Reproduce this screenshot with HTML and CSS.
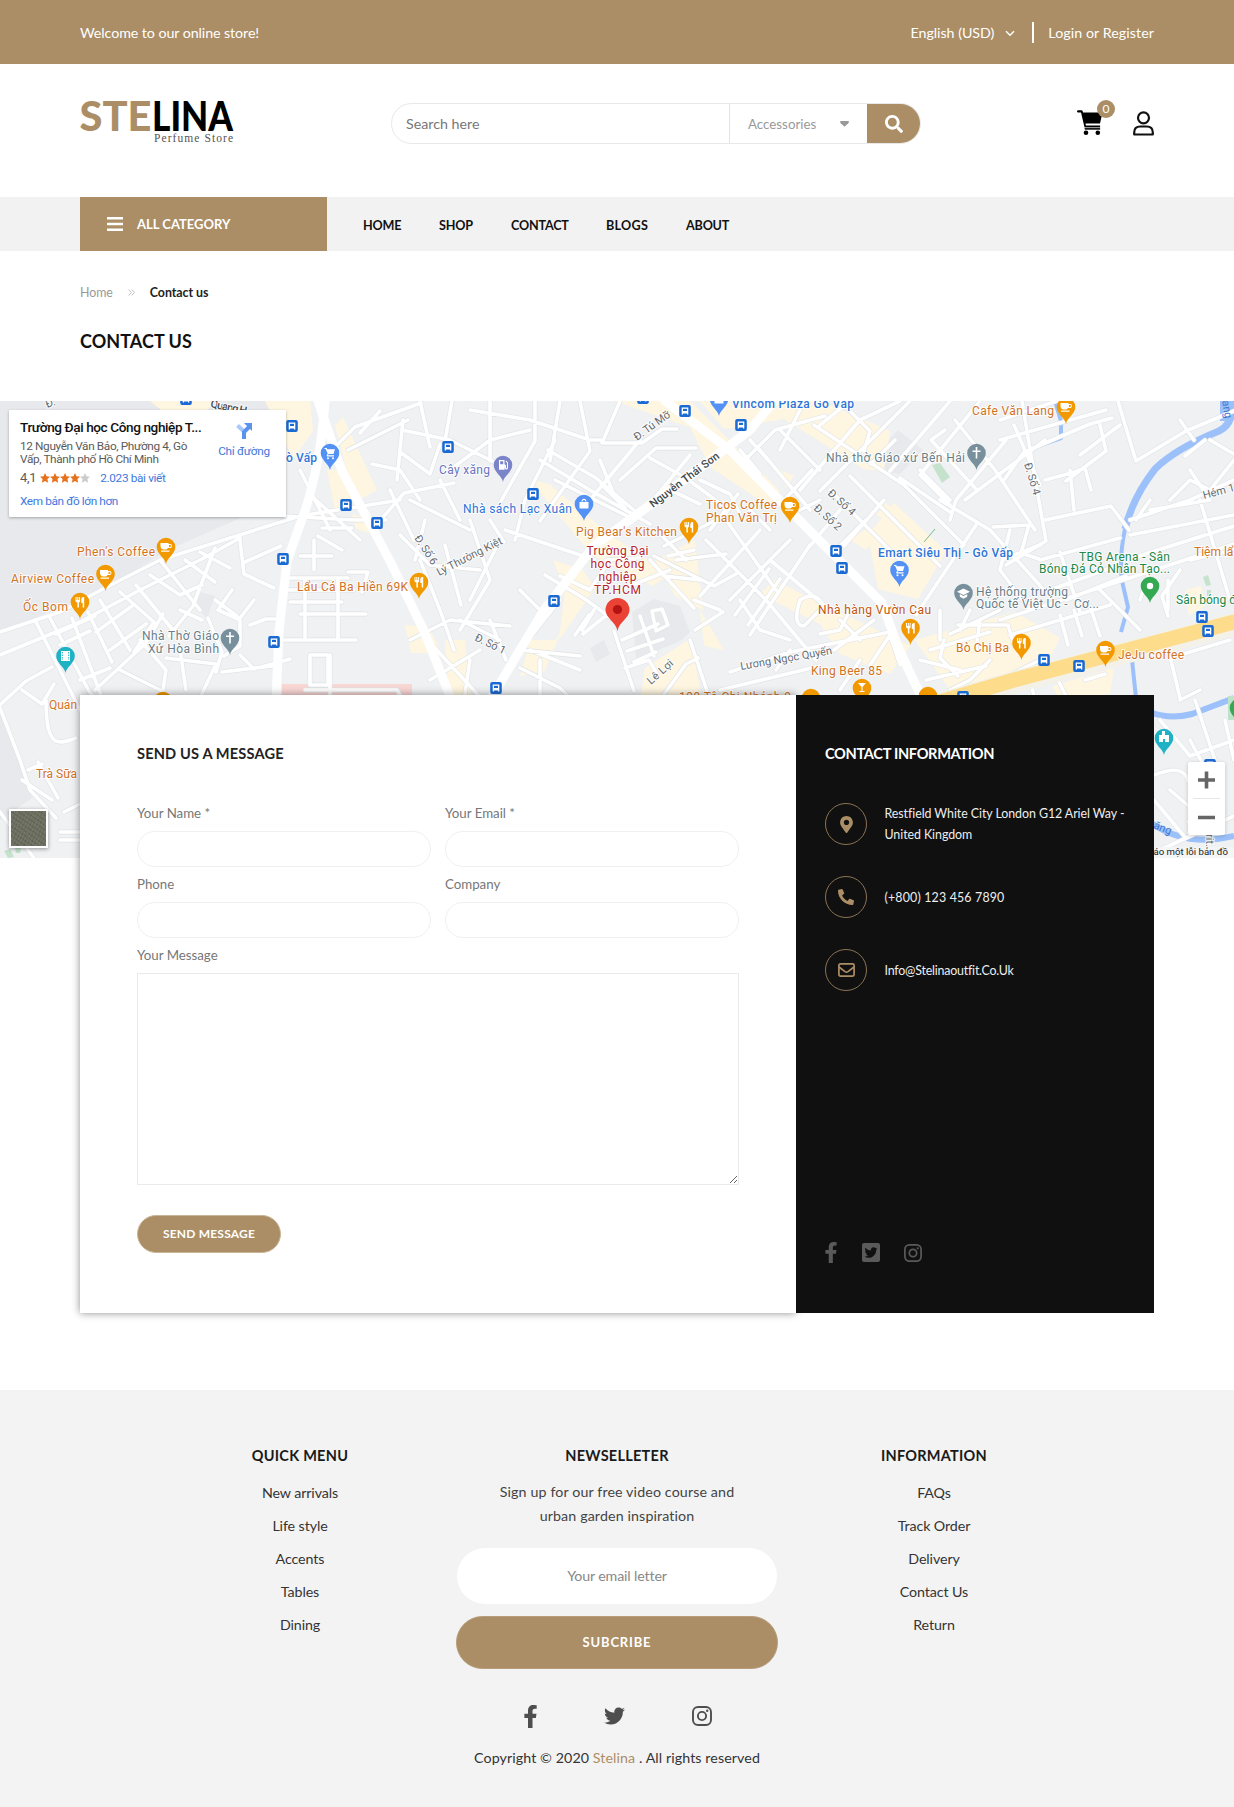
FILE: index.html
```html
<!DOCTYPE html>
<html lang="en">
<head>
<meta charset="utf-8">
<title>Contact us - Stelina</title>
<link rel="stylesheet" href="styles.css">
</head>
<body>
<svg class="defs" aria-hidden="true">
  <defs>
    <symbol id="facebook" viewBox="0 0 320 512"><path d="M279.14 288l14.22-92.66h-88.91v-60.13c0-25.35 12.42-50.06 52.24-50.06h40.42V6.26S260.43 0 225.36 0c-73.22 0-121.08 44.38-121.08 124.72v70.62H22.89V288h81.39v224h100.17V288z"/></symbol>
    <symbol id="twitter" viewBox="0 0 512 512"><path d="M459.37 151.716c.325 4.548.325 9.097.325 13.645 0 138.72-105.583 298.558-298.558 298.558-59.452 0-114.68-17.219-161.137-47.106 8.447.974 16.568 1.299 25.34 1.299 49.055 0 94.213-16.568 130.274-44.832-46.132-.975-84.792-31.188-98.112-72.772 6.498.974 12.995 1.624 19.818 1.624 9.421 0 18.843-1.3 27.614-3.573-48.081-9.747-84.143-51.98-84.143-102.985v-1.299c13.969 7.797 30.214 12.67 47.431 13.319-28.264-18.843-46.781-51.005-46.781-87.391 0-19.492 5.197-37.36 14.294-52.954 51.655 63.675 129.3 105.258 216.365 109.807-1.624-7.797-2.599-15.918-2.599-24.04 0-57.828 46.782-104.934 104.934-104.934 30.213 0 57.502 12.67 76.67 33.137 23.715-4.548 46.456-13.32 66.599-25.34-7.798 24.366-24.366 44.833-46.132 57.827 21.117-2.273 41.584-8.122 60.426-16.243-14.292 20.791-32.161 39.308-52.628 54.253z"/></symbol>
    <symbol id="instagram" viewBox="0 0 20 20"><rect x="1" y="1" width="18" height="18" rx="5" fill="none" stroke="currentColor" stroke-width="1.9"/><circle cx="10" cy="10" r="4.1" fill="none" stroke="currentColor" stroke-width="1.9"/><circle cx="15.2" cy="4.8" r="1.2"/></symbol>

    <path id="pin" d="M0 0C-1-6-9.300-10-9.300-17A9.300 9.300 0 0 1 9.300-17C9.300-10 1-6 0 0z"/>
    <g id="g-cup"><path d="M-5.500-21h8v1h1.500a1.800 1.800 0 0 1 0 4H2q-1 1.500-2.500 1.500h-1.500q-3.500 0-3.500-4zM3-19v2h1a1 1 0 0 0 0-2zM-5-13.500H3.500v1.200H-5z"/></g>
    <g id="g-fork"><path d="M-4.500-22h1v3h.8v-3h1v3h.8v-3h1v4q0 1.300-1.200 1.600v5h-1.500v-5Q-4.500-17-4.500-18zM3-22h1.200v10.600H2.700V-16H1.300v-3.500Q1.300-21.700 3-22z"/></g>
    <g id="g-cross"><path d="M-.8-23h1.600v3.500H4v1.600H.8v6.400H-.8v-6.400H-4v-1.600h3.200z"/></g>
    <g id="g-cart"><path d="M-5.500-22h2.200l.5 1.300H5L3.500-16h-5l-.5 1.200h6v1.200h-7l-.3-.8 1-1.800-2-4.700h-1.200zM-2-12.800a1 1 0 1 1 0 2 1 1 0 0 1 0-2zm5 0a1 1 0 1 1 0 2 1 1 0 0 1 0-2z"/></g>
    <g id="g-bag"><path d="M-4.500-19h9v6.500h-9zM-2.500-19.200c0-4 5-4 5 0h-1c0-2.500-3-2.500-3 0z"/></g>
    <g id="g-fuel"><path d="M-4-22h5.500v4.500q1.500 0 1.500 1.300v2.200q1 .5 1-.5V-19l-1.500-1.700.7-.8L5-19.500v5.500q-.5 2-2.300 1.500-1-.5-1-3.500v3.800H-4zm1.200 1.200v3h3v-3z"/></g>
    <g id="g-cap"><path d="M0-21.500l6.500 3.200L0-15l-6.500-3.300zM-3.700-16l3.700 2 3.700-2v2.800L0-11.300l-3.700-1.900z"/></g>
    <g id="bus"><rect x="-5.800" y="-6" width="11.600" height="12" rx="2" fill="#1b6ad3"/><path d="M-3.300-3.500h6.600v7H2V2.500h-4v1h-1.300z" fill="#fff"/><path d="M-2-2.200h4V0h-4z" fill="#1b6ad3"/></g>
  </defs>
</svg>

<div class="topbar">
  <div class="container topbar-row">
    <span class="welcome">Welcome to our online store!</span>
    <div class="topbar-links">
      <span class="currency">English (USD)</span>
      <svg class="chevron" viewBox="0 0 10 7"><path d="M1 1.200l4 4 4-4"/></svg>
      <span class="bar"></span>
      <a class="login">Login or Register</a>
    </div>
  </div>
</div>

<header class="container header">
  <svg class="logo" viewBox="0 0 153 42">
    <g class="logo-word">
      <text class="logo-tan" x="-.5" y="30" textLength="72" lengthAdjust="spacingAndGlyphs">STE</text>
      <text x="72" y="30" textLength="81" lengthAdjust="spacingAndGlyphs">LINA</text>
    </g>
    <text class="logo-sub" x="74" y="40.500" textLength="79">Perfume Store</text>
  </svg>
  <form class="search">
    <span class="search-text">Search here</span>
    <span class="search-cat">Accessories <svg viewBox="0 0 9 6"><path d="M.5 0h8q.8 1-.2 2.200L4.500 5.700.700 2.200Q-.3 1 .5 0z"/></svg></span>
    <span class="search-btn"><svg viewBox="0 0 512 512"><path d="M505 442.700L405.300 343c-4.500-4.500-10.600-7-17-7H372c27.600-35.300 44-79.700 44-128C416 93.100 322.900 0 208 0S0 93.100 0 208s93.100 208 208 208c48.300 0 92.700-16.400 128-44v16.300c0 6.400 2.500 12.500 7 17l99.700 99.700c9.400 9.400 24.600 9.400 33.900 0l28.300-28.300c9.400-9.400 9.400-24.600.1-34zM208 336c-70.700 0-128-57.200-128-128 0-70.700 57.200-128 128-128 70.700 0 128 57.200 128 128 0 70.700-57.200 128-128 128z"/></svg></span>
  </form>
  <div class="actions">
    <div class="cart">
      <svg viewBox="0 0 26 26"><path d="M0 1.500Q0 .3 1.200.3h3.300q.8 0 1.200 1L6 2.500h19.500l-2.500 11H8.500l.4 2h14.200v1.800H7.500L4 2.500H1.200Q0 2.500 0 1.500z"/><path d="M7.500 17.800h15.600v1.900H7.800z" opacity=".9"/><circle cx="9" cy="22.800" r="2.300"/><circle cx="20.800" cy="22.800" r="2.300"/></svg>
      <span class="badge">0</span>
    </div>
    <svg class="user" viewBox="0 0 21 25"><circle cx="10.500" cy="6.800" r="5.500"/><path d="M1.200 23.500v-2q0-6 6-6h6.600q6 0 6 6v2z"/></svg>
  </div>
</header>

<nav class="nav">
  <div class="container nav-row">
    <div class="category"><svg viewBox="0 0 16 14"><path d="M0 1.200h16M0 7h16M0 12.800h16"/></svg>ALL CATEGORY</div>
    <div class="menu"><a>HOME</a><a>SHOP</a><a>CONTACT</a><a class="wide">BLOGS</a><a>ABOUT</a></div>
  </div>
</nav>

<div class="container heading">
  <div class="crumbs"><span>Home</span><svg viewBox="0 0 7 7"><path d="M.700.500l2.700 3-2.700 3M3.700.500l2.700 3-2.700 3"/></svg><b>Contact us</b></div>
  <h1>CONTACT US</h1>
</div>

<section class="map">
  <svg class="map-art" viewBox="0 401 1234 457">
    <rect y="401" width="1234" height="457" fill="#eff1f3"/>
    <g fill="#e7e9ec">
      <path d="M0 401h270v104l-100 44-70 42-100 41z"/>
      <path d="M0 706l20 60 12 32-32 22z"/>
      <path d="M632 612l22-13 26 7 10 26-8 8-46 20zM590 648l14-8 6 14-14 8zM880 450l18-20 25 20-23 24-15-2zM194 606l6-14 15 4-8 22z"/>
    </g>
    <g fill="#fef6e0">
      <path d="M150 401h65l-10 12h-40zM265 401h45l3 30-20 28zM335 425l8-8 8 18 26 55-22 12zM327 470l20 0 12 26-24 14zM352 515l12 2 6 16-14-4z"/>
      <path d="M615 401h75l30 30 60 60-10 16-60-40-20-40-30-10zM700 401h120l70 30-6 40-20-2-80-50-60 10z"/>
      <path d="M535 480l14 4 60 50 60 40-16 12-60-30-55-66zM565 590l-12-30 30 10 12 18-36 52zM530 640l26 0 12-24 6-14-30 70-24 4z"/>
      <path d="M655 560l40-20 8 70-28-14zM700 610l24 40-20-4zM645 668l46-30 10 58h-60z"/>
      <path d="M868 535l26-32 52 48-28 48-40-10zM780 470l14 6-8 12zM850 540l20-14 8 8-12 16zM876 515l10-12 26 20-8 6z"/>
      <path d="M814 600l-40-20-14 14 60 30 20 30 50 20 20-28zM915 640l100-28 45 26-10 20-80 32h-20zM1052 686l62-18-4 26-50 6z"/>
      <path d="M405 625l24 2 12 26-30 0zM445 640l20 0 6 60h-22zM820 408l30 20-20 16-40-24zM1185 590l16-4 4 20-16 10z"/>
    </g>
    <path d="M282 684h130v14H282z" fill="#f9d7d5"/>
    <path d="M932 465l8-2 10 14-8 6zM1203 577l5-2 3 10-5 1zM1207 590l4 0 0 6-4 0zM4 851l6-2 4 8-6 1zM15 847l6 0-1 6-4 0z" fill="#c5e3cc"/>
    <path d="M924 542l11-13" stroke="#7db98c" fill="none"/>
    <g fill="none" stroke="#9cc0f9" stroke-linejoin="round">
      <path d="M1231 401q4 22-12 30-44 18-64 38-22 28-30 60" stroke-width="7"/>
      <path d="M1226 401v20" stroke-width="12"/>
      <path d="M1125 529q-6 28-3 52l6 26-7 25M1132 660l4 38M1055 401l6 20v17l-26 9" stroke-width="4"/>
      <path d="M1150 712q20 8 42 2l42-16M1150 822q36 26 84 14" stroke-width="6"/>
    </g>
    <defs>
      <path id="lanes" d="M0 632L60 612 105 588 160 560 300 516 400 500M0 655L80 622 140 590 200 560 240 538M35 620l30 60 15 30M50 618l40 75 12 10M55 634l40-18M60 645l30-14M72 618l30 80M88 612l24 50M95 690l50-46 18-30M80 680l30-12M100 600l30 50M120 592l34 30-20 30M136 585l36 44M150 575l30 20 22-10M160 560l40 50M215 548l-22 58-24 30M185 560l30 22M200 552l30 16M215 600l22 16M180 610l22 10M96 632l36-26M110 650l36-26 M240 540l4 34 30 14M245 562l36-16M232 590l-14 20 22 10 0 26-16 10M254 600l-14 18M250 625l16-6 14 0M240 655l14 14 36-10M208 618l14 34-6 20M140 640l26 30-4 26M120 670l40 20M166 658l50 6-16 34M180 650l6 40M222 672l50-6"/>
      <path id="lanes2" d="M0 705l26-24 26-14M0 708l20 52 10 30 26 28M22 690l20 14 12-20M46 700c0 46 10 46 30 38M22 780l30 20M28 770l14-6M60 840h20M64 812l16-8M38 762l20 36M60 832h20M0 812l34 46M284 640h72M305 578v60M338 578v60M288 578h60M286 590h68M290 602l52 0M300 614h66M314 540v30M300 556h32M348 572h20l-6 20M310 655h18v30h-18zM330 655v40M305 690h92l8 14M284 516l70 4 32 0M316 500l44 40M300 470l30 60M318 536l24 14M322 528h30M335 447l20-20 66-24M348 450l60-30M372 464l28 6 20 30M390 490l24 50M360 433l20-22M378 523l26-30 50-10M397 480l6-60M420 401l10 46M402 430l48 10 60 30M452 401l-8 46M400 452l30 22 10-30M440 480l20 40M410 500l60 30M425 520l-10 40M445 545l16 60M420 560l20 50 14 40M400 535l30 30 50 5M470 520l20 60-30 50M500 540l-30 60M490 520l14 22M505 530l30 10 60 20M530 430l-40 10-40 30M490 401v60M470 410l60 10 60 20 12 0M535 401v40l-34 60M560 401l-10 60M555 440l-30 60-10 40M580 401l10 50-50 70M602 443h40l20-14 15 0M620 401l-18 42M540 460l50 30 60 34M548 450l48 28 40 34M555 480l80 40M590 500l50-60M612 490l-12-30M620 480l36-32 40 0M625 508l-24-24M650 458l36 20 40 30M690 455l-44 54M670 490l30 14M700 480l30 14 10 20M656 530l30 30M664 546l60-30 10-14M676 560l50-6M640 558l-34 2M710 530l28-36M610 560l-20 30-30-14M620 590l50-20M545 575l40 24 30 22M540 610l-20-20M560 600l-40 50 60 6M575 635l14-20M583 634l30-24M594 610l-12 20M530 650l50 20M500 640l-40-20M410 640l40-20 60 6M430 680l50-30M470 660l-6 40M490 620l16 40M520 668l40 20 10 10M540 660v40M480 697l-46-50"/>
      <path id="lanes3" d="M622 640l36-16M614 631l20 60M627 651l36-12M640 616l14 40M652 611l10-2 6 16-12 6zM634 662l22-10M625 668l24-8 8 14M660 700l26-36 12-6M690 640l20 60M650 560l44 48M694 600l26 10M700 580l-36-4M654 556l60 30 22-12M695 630l28-18M668 556l26-6M726 520l50 70M706 540l60 60 50 60M760 530l-60 66M790 540l-60 60M750 510l20 20M810 545l-60 90M770 560l60 50M735 615l34-46M748 625l32-46M740 600l20 30 30 10M790 650l-14 20M800 600q16-10 24 6l-20 20q-12 0-4-26M730 672l60-20 100-20M720 690l100-24M760 450l50 60M745 460l30-30 50-14M780 430l40 40M750 440l20 22M740 450l20 24M800 410l-20 40M820 425l30-24M812 470l-26 28M820 500l-20 10M840 510l-30 36M866 520l-36 36M884 500l-40 46M800 490l60-70 40-19M895 440l-24 24M814 425l90 60 60 60M910 401l-90 90M950 401l-60 70M840 401l30 30-6 20M850 476l90 90M830 490l70 70M980 401l-60 74 30 30M955 420l40 50 40 60M945 430l-14 10 46 50M1006 440l-50 60-6 20M920 470l30 30M900 478l50 34M1000 420l60-20M1000 440l106-30M1022 401l10 60 14 80-40 24M1014 425l26 60M1004 480l20-28 66-28 22-6M965 500l80-60M976 525l-60 90M940 500l50 30 54 60M993 527l36-2-8 28 18 6M1010 530l-10 40 30 40M1040 545l-36 14M1045 520l66-14 18 24M1045 480l30-8 10-4 6 22M1070 470l4 40M1100 425l6 26-40 30M1118 401l18 60 50-30 48-20M1120 425l-40 30M1180 420l14 20M1130 520l60-20 44-20M1130 535l104-20M1126 560l108-34M1150 500l-14 20M1170 500l20-20 20 10 24-30M1190 470l20 30-60 10M1200 500l30 100M1205 440l-20 16M1210 440l24 14"/>
      <path id="lanes4" d="M1040 560l80-22M1060 552l20 60M1050 590l66-24M1066 600l60-24M1000 620l234-76M1010 635l100-30M1090 606l10 30M1074 610l8 26M1060 615l8 30M1100 590l40 40M1168 580l0 30M1180 570l-18 26 6 20M1140 600l10-30M1190 560l44-10M940 610l0 30M960 630l10-20M944 640l-4 18 18 18M958 625h50l6 20M980 620l-4 30M990 660l-20 20-20 10M1000 610l-50 24M930 650l60-18M920 660l40 10M926 680l60-14M1000 680l40-20 14 20M1030 680l4 16M1056 676l10 20M1170 656l10 42M1230 640l-60 18M1085 680l20-6M840 620l20 20M834 650l40-30M850 610l-10 20-20 4M870 665l20-30 10 30M840 690l20-30M1160 720l30 36 44-16M1190 740l14 26M1154 775q30-12 34 6M1170 790l28 24-10 8M1225 720l9 40M1180 700l20-10M1195 700l20 60M1154 800l30 36M1160 850l74-34"/>
    </defs>
    <g fill="none" stroke-linejoin="round" stroke-linecap="round">
      <g stroke="#e0e3e6" stroke-width="4.800"><use href="#lanes"/><use href="#lanes2"/><use href="#lanes3"/><use href="#lanes4"/></g>
      <g stroke="#fff" stroke-width="3.600"><use href="#lanes"/><use href="#lanes2"/><use href="#lanes3"/><use href="#lanes4"/></g>
      <g stroke="#fff" stroke-width="9">
        <path d="M325 401q-4 60-20 110l-18 50-8 70-3 70M318 401l24 70 48 90 34 70 28 70"/>
        <path d="M490 700l54-90 50-64 90-66 66-50 25-30M665 401l66 50 83 84 68 68 16 44 28 60"/>
      </g>
      <path d="M926 708l88-26 220-58" stroke="#f3f1e8" stroke-width="22"/>
      <path d="M926 706l88-26 220-58" stroke="#fddc8c" stroke-width="15"/>
    </g>
    <g class="street">
      <text x="47" y="408" transform="rotate(-20 47 408)">Đ.</text>
      <text class="dark" x="210" y="407" transform="rotate(12 210 407)" textLength="37">Quang H</text>
      <text x="637" y="441" transform="rotate(-36 637 441)" textLength="42">Đ. Tú Mỡ</text>
      <text class="dark" x="653" y="508" transform="rotate(-37 653 508)" textLength="84">Nguyễn Thái Sơn</text>
      <text x="439" y="576" transform="rotate(-27 439 576)" textLength="72">Lý Thường Kiệt</text>
      <text x="414" y="538" transform="rotate(57 414 538)" textLength="33">Đ. Số 6</text>
      <text x="474" y="640" transform="rotate(26 474 640)" textLength="33">Đ. Số 1</text>
      <text x="651" y="685" transform="rotate(-42 651 685)" textLength="31">Lê Lợi</text>
      <text x="741" y="670" transform="rotate(-10 741 670)" textLength="93">Lương Ngọc Quyến</text>
      <text x="827" y="494" transform="rotate(42 827 494)" textLength="33">Đ. Số 4</text>
      <text x="813" y="509" transform="rotate(42 813 509)" textLength="33">Đ. Số 2</text>
      <text x="1024" y="464" transform="rotate(73 1024 464)" textLength="33">Đ. Số 4</text>
      <text x="1204" y="499" transform="rotate(-15 1204 499)">Hém 1</text>
      <text x="1206" y="834" transform="rotate(90 1206 834)">rit.</text>
      <text class="water" x="1153" y="828" transform="rotate(22 1153 828)">ăng</text>
      <text class="water" x="1222" y="401" transform="rotate(80 1222 401)">ang</text>
    </g>
    <g>
      <use href="#bus" x="186" y="399"/><use href="#bus" x="292" y="426"/><use href="#bus" x="346" y="505"/><use href="#bus" x="377" y="523"/><use href="#bus" x="283" y="559"/><use href="#bus" x="274" y="642"/>
      <use href="#bus" x="448" y="447"/><use href="#bus" x="533" y="494"/><use href="#bus" x="554" y="601"/><use href="#bus" x="496" y="688"/><use href="#bus" x="643" y="398"/><use href="#bus" x="685" y="411"/><use href="#bus" x="741" y="425"/>
      <use href="#bus" x="836" y="551"/><use href="#bus" x="842" y="568"/><use href="#bus" x="1202" y="617"/><use href="#bus" x="1208" y="631"/><use href="#bus" x="1044" y="660"/><use href="#bus" x="1079" y="666"/><use href="#bus" x="963" y="697"/><use href="#bus" x="1210" y="765"/>
    </g>
    <g class="poi food">
      <text x="77" y="556" textLength="78">Phen's Coffee</text>
      <text x="11" y="583" textLength="83">Airview Coffee</text>
      <text x="23" y="611" textLength="45">Ốc Bom</text>
      <text x="49" y="709">Quán</text>
      <text x="36" y="778">Trà Sữa</text>
      <text x="297" y="591" textLength="111">Lẩu Cá Ba Hiền 69K</text>
      <text x="576" y="536" textLength="101">Pig Bear's Kitchen</text>
      <text x="706" y="509" textLength="71">Ticos Coffee</text>
      <text x="706" y="522" textLength="71">Phan Văn Trị</text>
      <text x="679" y="701" textLength="112">199 Tô Chi Nhánh 9</text>
      <text x="972" y="415" textLength="82">Cafe Văn Lang</text>
      <text class="hot" x="818" y="614" textLength="113">Nhà hàng Vườn Cau</text>
      <text x="956" y="652" textLength="53">Bò Chị Ba</text>
      <text x="811" y="675" textLength="71">King Beer 85</text>
      <text x="1118" y="659" textLength="66">JeJu coffee</text>
      <text x="1194" y="556">Tiệm lẩu</text>
    </g>
    <g class="poi shop">
      <text x="286" y="462" textLength="31">ò Vấp</text>
      <text class="plain" x="463" y="513" textLength="109">Nhà sách Lạc Xuân</text>
      <text x="732" y="408" textLength="122">Vincom Plaza Gò Vấp</text>
      <text x="878" y="557" textLength="135">Emart Siêu Thị - Gò Vấp</text>
    </g>
    <g class="poi place">
      <text class="fuel" x="439" y="474" textLength="51">Cây xăng</text>
      <text x="826" y="462" textLength="139">Nhà thờ Giáo xứ Bến Hải</text>
      <text x="976" y="596" textLength="92">Hệ thống trường</text>
      <text x="976" y="608" textLength="123">Quốc tế Việt Úc -&#160; Cơ...</text>
      <text x="142" y="640" textLength="77">Nhà Thờ Giáo</text>
      <text x="148" y="653" textLength="71">Xứ Hòa Bình</text>
    </g>
    <g class="poi park">
      <text x="1079" y="561" textLength="91">TBG Arena - Sân</text>
      <text x="1039" y="573" textLength="131">Bóng Đá Cỏ Nhân Tạo...</text>
      <text x="1176" y="604">Sân bóng đá</text>
    </g>
    <g class="poi target">
      <text x="617.500" y="555" textLength="62">Trường Đại</text>
      <text x="617.500" y="568" textLength="54">học Công</text>
      <text x="617.500" y="581" textLength="38">nghiệp</text>
      <text x="617.500" y="594" textLength="47">TP.HCM</text>
    </g>
    <g fill="#f29900">
      <use href="#pin" x="166" y="564"/><use href="#pin" x="105.500" y="591"/><use href="#pin" x="80" y="619"/><use href="#pin" x="163" y="718"/><use href="#pin" x="419" y="599"/><use href="#pin" x="689" y="544"/><use href="#pin" x="790" y="523"/><use href="#pin" x="1066" y="424"/><use href="#pin" x="910.500" y="645"/><use href="#pin" x="1021.500" y="660"/><use href="#pin" x="862" y="705"/><use href="#pin" x="1105.500" y="667"/><use href="#pin" x="928" y="713"/><use href="#pin" x="811" y="715"/>
    </g>
    <g fill="#5491f5"><use href="#pin" x="330" y="470"/><use href="#pin" x="584" y="521"/><use href="#pin" x="719" y="416"/><use href="#pin" x="899.500" y="587"/></g>
    <g fill="#78909c"><use href="#pin" x="230" y="655"/><use href="#pin" x="976.500" y="470"/><use href="#pin" x="963.500" y="610"/></g>
    <use href="#pin" x="503" y="482" fill="#7b83c9"/>
    <g fill="#1eb2c4"><use href="#pin" x="65.500" y="673"/><use href="#pin" x="1164" y="755"/></g>
    <path d="M1228 696h6v24h-6z" fill="#bfe3c8"/>
    <g fill="#34a853"><use href="#pin" x="1150" y="603"/><use href="#pin" x="1239" y="725"/></g>
    <g fill="#fff">
      <use href="#g-cup" x="166" y="564"/><use href="#g-cup" x="105.500" y="591"/><use href="#g-cup" x="790" y="523"/><use href="#g-cup" x="1066" y="424"/><use href="#g-cup" x="1105.500" y="667"/>
      <use href="#g-fork" x="80" y="619"/><use href="#g-fork" x="419" y="599"/><use href="#g-fork" x="689" y="544"/><use href="#g-fork" x="910.500" y="645"/><use href="#g-fork" x="1021.500" y="660"/>
      <path d="M858 683h8l-3.500 4v4h2v1h-5v-1h2v-4z"/>
      <use href="#g-cross" x="230" y="655"/><use href="#g-cross" x="976.500" y="470"/>
      <use href="#g-cart" x="330" y="470"/><use href="#g-cart" x="899.500" y="587"/><use href="#g-bag" x="584" y="521"/><use href="#g-bag" x="719" y="416"/><use href="#g-fuel" x="503" y="482"/><use href="#g-cap" x="963.500" y="610"/>
      <path d="M61 651h9v10h-9z"/><path d="M1159 742v-7h3v-4h3v4h4v7h-4v-3h-2v3z"/><circle cx="1150" cy="586" r="3.200"/>
    </g>
    <path d="M62.300 652v8M68.700 652v8" stroke="#1eb2c4" stroke-dasharray="1.500 1"/>
    <path d="M617.500 631c-1.500-9-12-13-12-21a12 12 0 0 1 24 0c0 8-10.500 12-12 21z" fill="#ea4335"/>
    <circle cx="617.500" cy="609.500" r="4.600" fill="#b31412"/>
    <path d="M1154 847h80v11h-80z" fill="#f5f5f5" opacity=".75"/>
    <text class="legal" x="1228" y="855">Báo cáo một lỗi bản đồ</text>
  </svg>

  <div class="place-card">
    <div class="place-main">
      <div class="place-name">Trường Đại học Công nghiệp T...</div>
      <div class="place-address">12 Nguyễn Văn Bảo, Phường 4, Gò<br>Vấp, Thành phố Hồ Chí Minh</div>
      <div class="place-rating">4,1
        <svg viewBox="0 0 50 10"><defs><path id="star" d="M5 0l1.500 3.300 3.500.4-2.600 2.400.7 3.600L5 7.900 1.900 9.700l.700-3.600L0 3.700l3.500-.4z"/></defs><g fill="#e7711b"><use href="#star"/><use href="#star" x="10"/><use href="#star" x="20"/><use href="#star" x="30"/></g><use href="#star" x="40" fill="#ccc"/></svg>
        <a>2.023 bài viết</a></div>
      <a class="place-more">Xem bản đồ lớn hơn</a>
    </div>
    <div class="directions">
      <svg viewBox="0 0 16 16"><path d="M1.500 2.500l6.500 6V16" stroke="#a9c8fb" stroke-width="4" fill="none"/><path d="M8 16V9l5-5" stroke="#5a93ee" stroke-width="4" fill="none"/><path d="M8 0h8v8z" fill="#5a93ee"/></svg>
      <span>Chỉ đường</span>
    </div>
  </div>
  <div class="satellite"></div>
  <div class="zoom">
    <svg viewBox="0 0 37 73"><path d="M18.500 9.500v17M10 18h17M10 55.500h17" stroke="#666" stroke-width="3.600"/><path d="M5 36.500h27" stroke="#e6e6e6"/></svg>
  </div>
</section>

<section class="container contact">
  <form class="message">
    <h2>SEND US A MESSAGE</h2>
    <div class="fields">
      <label>Your Name *<input type="text"></label>
      <label>Your Email *<input type="text"></label>
      <label>Phone<input type="text"></label>
      <label>Company<input type="text"></label>
      <label class="full">Your Message<textarea></textarea></label>
    </div>
    <button type="button">SEND MESSAGE</button>
  </form>
  <aside class="info">
    <h2>CONTACT INFORMATION</h2>
    <div class="info-item"><span class="ring"><svg class="i-pin" viewBox="0 0 384 512"><path d="M172.268 501.670C26.970 291.031 0 269.413 0 192 0 85.961 85.961 0 192 0s192 85.961 192 192c0 77.413-26.970 99.031-172.268 309.670-9.535 13.774-29.930 13.773-39.464 0zM192 272c44.183 0 80-35.817 80-80s-35.817-80-80-80-80 35.817-80 80 35.817 80 80 80z"/></svg></span><p>Restfield White City London G12 Ariel Way -<br>United Kingdom</p></div>
    <div class="info-item"><span class="ring"><svg class="i-phone" viewBox="0 0 512 512"><path transform="matrix(-1 0 0 1 512 0)" d="M493.400 24.600l-104-24c-11.300-2.600-22.900 3.300-27.500 13.900l-48 112c-4.200 9.800-1.400 21.300 6.900 28l60.600 49.600c-36 76.700-98.900 140.500-177.200 177.200l-49.600-60.600c-6.800-8.300-18.200-11.100-28-6.900l-112 48C3.900 366.500-2 378.100.6 389.400l24 104C27.100 504.200 36.700 512 48 512c256.100 0 464-207.500 464-464 0-11.200-7.700-20.900-18.600-23.400z"/></svg></span><p class="phone">(+800) 123 456 7890</p></div>
    <div class="info-item"><span class="ring"><svg class="i-mail" viewBox="0 0 17 14"><rect x=".9" y=".9" width="15.200" height="12.200" rx="1.500"/><path d="M1 4l6 4.600q1.500 1 3 0L16 4"/></svg></span><p class="mail">Info@Stelinaoutfit.Co.Uk</p></div>
    <div class="info-social">
      <svg class="s-fb" viewBox="22 0 275 512"><use href="#facebook" width="320" height="512"/></svg>
      <svg class="s-tw" viewBox="0 0 18 19"><rect width="18" height="19" rx="2"/><svg x="2.500" y="3" width="13" height="13" viewBox="0 0 512 512" color="#101010" fill="#101010"><use href="#twitter"/></svg></svg>
      <svg class="s-ig" viewBox="0 0 20 20"><use href="#instagram"/></svg>
    </div>
  </aside>
</section>

<footer class="footer">
  <div class="footer-cols">
    <div class="col"><h3>QUICK MENU</h3><a>New arrivals</a><a>Life style</a><a>Accents</a><a>Tables</a><a>Dining</a></div>
    <div class="col">
      <h3>NEWSELLETER</h3>
      <p>Sign up for our free video course and<br>urban garden inspiration</p>
      <div class="email">Your email letter</div>
      <button type="button">SUBCRIBE</button>
      <div class="social">
        <svg class="f-fb" viewBox="22 0 275 512"><use href="#facebook" width="320" height="512"/></svg>
        <svg class="f-tw" viewBox="0 48 512 416"><use href="#twitter" width="512" height="512"/></svg>
        <svg class="f-ig" viewBox="0 0 20 20"><use href="#instagram"/></svg>
      </div>
      <div class="copy">Copyright © 2020 <a>Stelina</a> . All rights reserved</div>
    </div>
    <div class="col"><h3>INFORMATION</h3><a>FAQs</a><a>Track Order</a><a>Delivery</a><a>Contact Us</a><a>Return</a></div>
  </div>
</footer>
</body>
</html>
```
FILE: styles.css
```css
* { box-sizing: border-box; }
body { margin: 0; background: #fff; color: #222; font-family: Lato, "Liberation Sans", sans-serif; font-size: 14.25px; overflow-x: hidden; }
h1, h2, h3, p { margin: 0; }
svg { display: block; flex: none; }
.defs { position: absolute; width: 0; height: 0; }
.container { width: 1074px; margin: 0 auto; }

.topbar { background: #ab8e66; color: #fff; height: 64px; }
.topbar-row { display: flex; justify-content: space-between; align-items: center; height: 64px; }
.topbar-links { display: flex; align-items: center; }
.welcome { letter-spacing: -.08px; }
.currency { letter-spacing: -.04px; }
.chevron { width: 10px; height: 7px; margin: 3px 17px 0 11px; fill: none; stroke: #fff; stroke-width: 1.5; }
.bar { width: 2px; height: 21px; background: #fff; margin-right: 14px; }
.login { letter-spacing: .06px; }

.header { display: flex; height: 133px; padding-top: 37px; }
.logo { width: 153px; height: 42px; overflow: visible; }
.logo-word { font: 900 41px Lato, sans-serif; fill: #000; }
.logo-tan { fill: #ab8e66; }
.logo-sub { font: 11.5px "Liberation Serif", serif; fill: #555; }
.search { display: flex; width: 530px; height: 41px; margin: 2px 0 0 158px; border: 1px solid #e8e8e8; border-radius: 21px; overflow: hidden; }
.search-text { flex: 1; padding-left: 14px; line-height: 39px; color: #777; letter-spacing: 0; }
.search-cat { display: flex; align-items: center; justify-content: space-between; width: 138px; padding: 0 18px 0 18px; border-left: 1px solid #e3e3e3; color: #999; font-size: 13.3px; letter-spacing: .01px; }
.search-cat svg { width: 9px; height: 6px; fill: #999; }
.search-btn { display: flex; align-items: center; justify-content: center; width: 54px; margin: -1px -1px -1px 0; padding-right: 1px; background: #ab8e66; }
.search-btn svg { width: 18px; height: 18px; fill: #fff; }
.actions { display: flex; margin: 9px 0 0 auto; gap: 30px; }
.cart { position: relative; width: 26px; height: 26px; }
.badge { position: absolute; left: 20px; top: -10px; width: 18px; height: 18px; border-radius: 50%; background: #ab8e66; color: #fff; font-size: 12px; line-height: 18px; text-align: center; }
.user { width: 21px; height: 25px; margin-top: 1px; fill: none; stroke: #111; stroke-width: 2.2; stroke-linejoin: round; }

.nav { background: #f2f2f2; height: 54px; }
.nav-row { display: flex; }
.category { display: flex; align-items: center; gap: 14px; width: 247px; height: 54px; padding-left: 27px; background: #ab8e66; color: #fff; font-weight: 700; font-size: 13px; }
.category svg { width: 16px; height: 14px; stroke: #fff; stroke-width: 2.4; }
.menu { display: grid; grid-template-columns: 76px 72px 95px 80px auto; align-items: center; margin-left: 36px; padding-top: 2px; font-weight: 700; font-size: 12.6px; letter-spacing: -.2px; color: #111; }
.menu .wide { letter-spacing: .3px; }

.crumbs { display: flex; align-items: center; height: 20px; margin-top: 31px; font-size: 12.4px; letter-spacing: -.05px; color: #999; }
.crumbs svg { width: 7px; height: 7px; margin: 0 15px 0 15px; fill: none; stroke: #bbb; stroke-width: .9; }
.crumbs b { color: #222; font-weight: 700; letter-spacing: -.05px; }
.heading h1 { margin: 27px 0 48px; font-size: 18px; line-height: 24px; font-weight: 700; letter-spacing: .05px; color: #111; }

.map { position: relative; height: 457px; overflow: hidden; }
.map-art { width: 1234px; height: 457px; font-family: Roboto, "Noto Sans", sans-serif; }
.poi { font-size: 12px; paint-order: stroke; stroke: rgba(255, 255, 255, .85); stroke-width: 2px; stroke-linejoin: round; }
.food { fill: #d2731e; }
.hot { fill: #c2560c; }
.shop { fill: #2f75d8; font-weight: 500; }
.shop .plain { font-weight: 400; }
.place { fill: #6b7f89; }
.fuel { fill: #6a75c0; }
.park { fill: #22884a; }
.target { fill: #b5262d; text-anchor: middle; }
.street { font-size: 11px; fill: #666b70; paint-order: stroke; stroke: rgba(255, 255, 255, .85); stroke-width: 2px; }
.street .dark { fill: #44484c; font-weight: 500; }
.street .water { fill: #3f78d0; stroke: none; }
.legal { font-size: 9.6px; fill: #222; text-anchor: end; }
.place-card { position: absolute; left: 9px; top: 9px; display: flex; width: 277px; height: 107px; padding: 9px 17px 0 11px; background: #fff; box-shadow: 0 1px 3px rgba(0, 0, 0, .3); border-radius: 1px; font-family: Roboto, "Noto Sans", sans-serif; font-size: 12px; color: #5b5b5b; white-space: nowrap; }
.place-card a, .directions { color: #3f78dd; }
.place-main { width: 199px; flex: none; }
.place-name { color: #111; font-size: 13.6px; font-weight: 500; line-height: 16px; letter-spacing: -.41px; }
.place-address { margin-top: 5px; line-height: 13px; letter-spacing: -.37px; font-size: 11.8px; }
.place-rating { display: flex; align-items: center; margin-top: 4px; height: 15px; font-size: 13px; letter-spacing: -.3px; }
.place-rating svg { width: 50px; height: 10px; margin: 0 10px 0 4px; }
.place-rating a { font-size: 11.8px; letter-spacing: -.35px; }
.place-more { display: block; margin-top: 9px; line-height: 15px; font-size: 11.8px; letter-spacing: -.38px; }
.directions { display: flex; flex-direction: column; align-items: center; gap: 5px; width: 50px; padding-top: 4px; line-height: 14px; font-size: 11.8px; letter-spacing: -.3px; }
.directions svg { width: 16px; height: 16px; }
.satellite { position: absolute; left: 9px; top: 408px; width: 39px; height: 39px; border: 2px solid #fff; box-shadow: 0 1px 4px rgba(0, 0, 0, .4); background: repeating-linear-gradient(35deg, rgba(40, 42, 32, .18) 0 1px, transparent 1px 4px), repeating-linear-gradient(115deg, rgba(170, 170, 150, .16) 0 1px, transparent 1px 3px), #6c6e60; }
.zoom { position: absolute; left: 1188px; top: 361px; width: 37px; height: 73px; background: #fff; border-radius: 2px; box-shadow: 0 1px 4px rgba(0, 0, 0, .2); }

.contact { position: relative; display: flex; height: 618px; margin-top: -163px; margin-bottom: 77px; }
.contact h2 { font-size: 14.6px; line-height: 20px; margin-bottom: 39px; }
.message { width: 716px; padding: 49px 57px 0; background: #fff; box-shadow: 0 0 8px rgba(0, 0, 0, .45); }
.message h2 { color: #222; letter-spacing: .15px; }
.fields { display: grid; grid-template-columns: 294px 294px; column-gap: 14px; row-gap: 7.2px; color: #777; font-size: 13.3px; line-height: 20px; letter-spacing: -.02px; }
.fields label { display: flex; flex-direction: column; gap: 8px; }
.fields .full { grid-column: 1 / 3; }
.fields input { height: 36px; border: 1px solid #f0f0f0; border-radius: 18px; background: #fff; }
.fields textarea { height: 212px; border: 1px solid #eaeaea; border-radius: 0; resize: vertical; }
.message button { display: block; width: 144px; height: 38px; margin-top: 29.500px; padding: 0; border: 1px solid #c9b697; border-radius: 19px; background: #ab8e66; color: #fff; font: 700 12px Lato, sans-serif; letter-spacing: .2px; }
.info { position: relative; display: flex; flex-direction: column; width: 358px; padding: 49px 20px 50px 29px; background: #101010; color: #eee; }
.info h2 { color: #fff; letter-spacing: -.33px; }
.info-item { display: flex; align-items: center; gap: 17.500px; height: 42px; margin-bottom: 31px; font-size: 12.4px; line-height: 21px; letter-spacing: -.06px; white-space: nowrap; }
.info-item .phone { letter-spacing: .17px; }
.info-item .mail { letter-spacing: -.2px; }
.ring { display: flex; align-items: center; justify-content: center; width: 42px; height: 42px; border: 1px solid #8a7354; border-radius: 50%; }
.ring svg { fill: #ab8e66; }
.ring .i-pin { width: 13px; height: 17px; }
.ring .i-phone { width: 16px; height: 16px; }
.ring .i-mail { width: 17px; height: 14px; fill: none; stroke: #ab8e66; stroke-width: 1.7; }
.info-social { display: flex; align-items: center; margin-top: auto; color: #5a5a5a; fill: #5a5a5a; }
.s-fb { width: 12px; height: 21px; }
.s-tw { width: 18px; height: 19px; margin-left: 25px; }
.s-ig { width: 18px; height: 18px; margin-left: 24px; }

.footer { height: 417px; padding-top: 56px; background: #f3f3f3; }
.footer-cols { display: grid; grid-template-columns: 312px 322px 312px; justify-content: center; text-align: center; letter-spacing: -.1px; color: #333; }
.col { display: flex; flex-direction: column; align-items: center; white-space: nowrap; }
.col h3 { font-size: 14.5px; line-height: 20px; letter-spacing: .25px; color: #1a1a1a; margin-bottom: 10px; }
.col > a { line-height: 33px; }
.col p { margin-top: 4px; line-height: 24px; letter-spacing: .12px; color: #444; }
.email { width: 320px; height: 56px; margin-top: 20px; border-radius: 28px; background: #fff; color: #888; line-height: 56px; letter-spacing: -.16px; }
.col button { width: 322px; height: 53px; margin-top: 11.500px; border: 1px solid #b79d79; border-radius: 27px; background: #ab8e66; color: #fff; font: 700 13px Lato, sans-serif; letter-spacing: .83px; }
.social { display: flex; align-items: center; height: 23px; margin: 36px 0 0 1px; gap: 67px; color: #4e4e4e; fill: #4e4e4e; }
.f-fb { width: 13px; height: 23px; }
.f-tw { width: 21px; height: 18px; }
.f-ig { width: 20px; height: 20px; }
.copy { margin-top: 18.500px; line-height: 24px; letter-spacing: .08px; }
.copy a { color: #ab8e66; }
```
